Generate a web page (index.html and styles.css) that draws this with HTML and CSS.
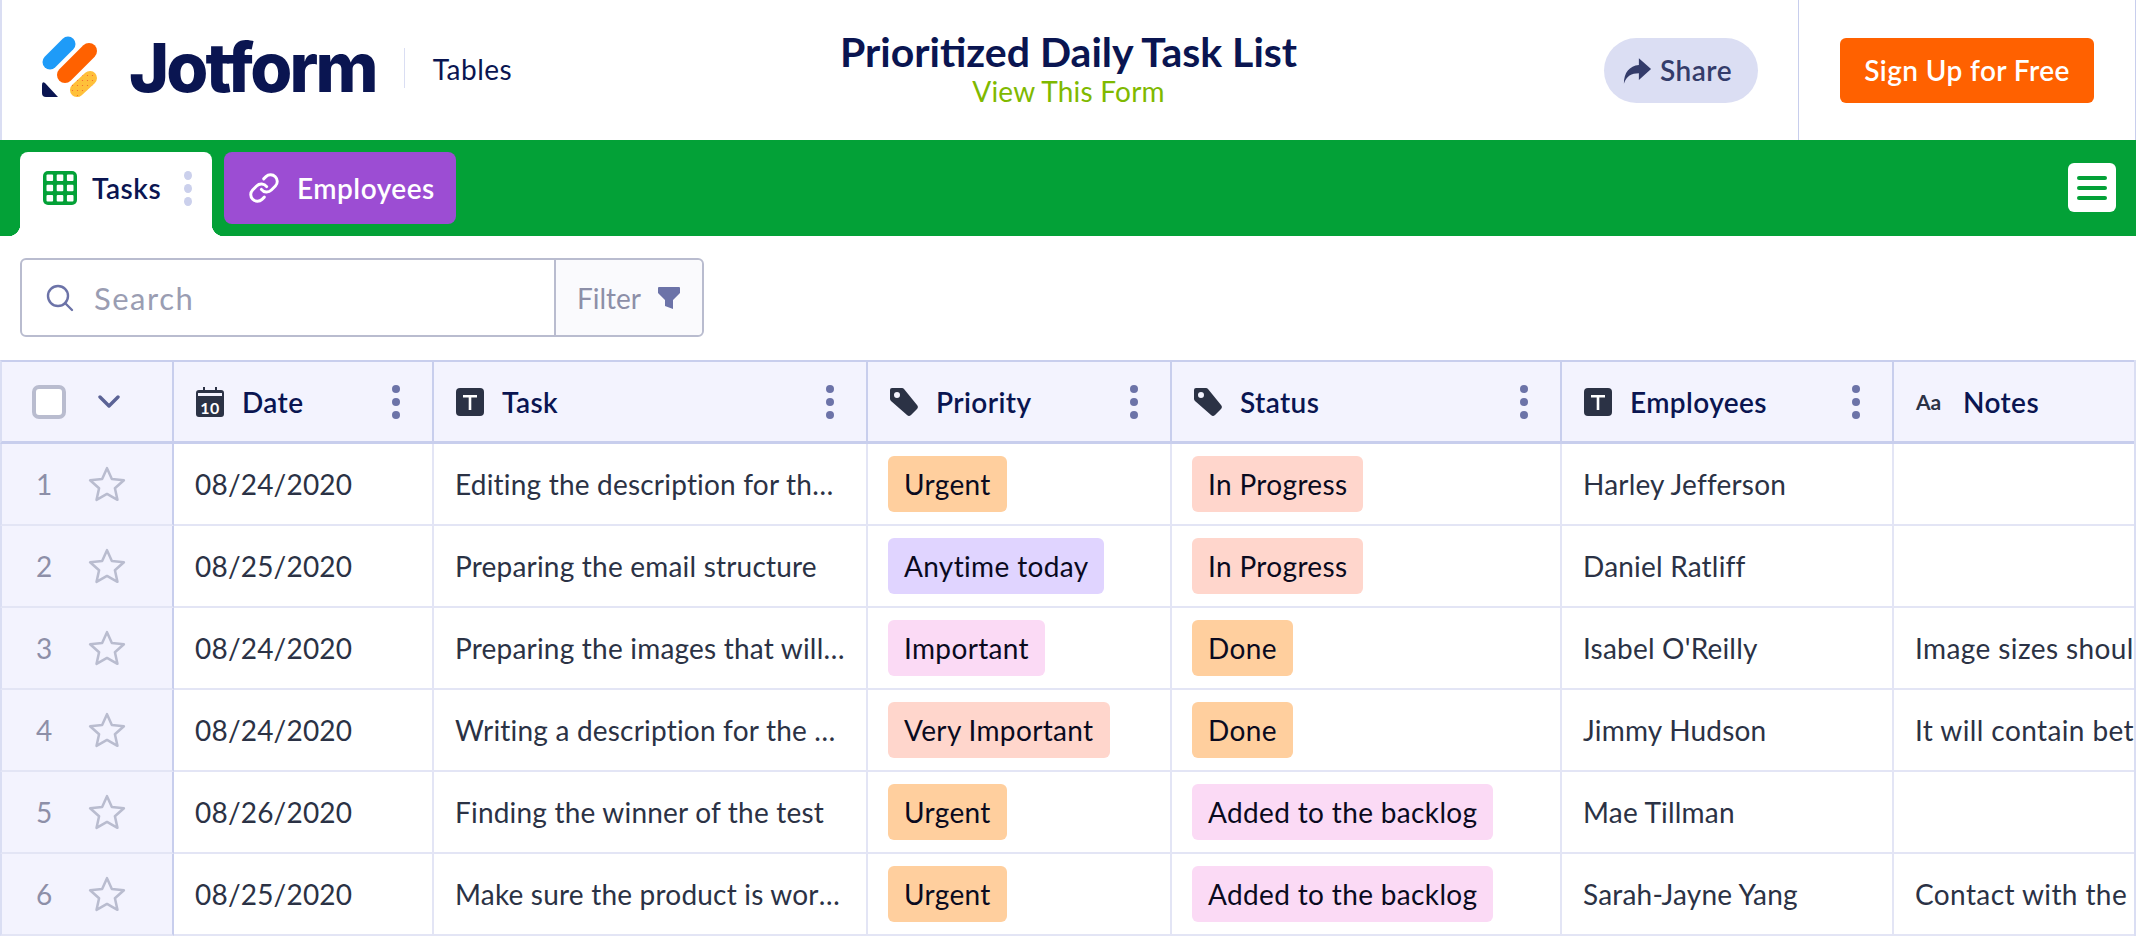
FILE: index.html
```html
<!DOCTYPE html>
<html lang="en">
<head>
  <meta charset="UTF-8">
  <title>Prioritized Daily Task List</title>
  <link rel="stylesheet" href="styles.css">
</head>
<body>
  <header class="top-bar">
    <div class="brand">
      <svg class="logo-mark" viewBox="40 32 60 64" width="60" height="64">
        <defs>
          <pattern id="logo-dots" width="5" height="5" patternUnits="userSpaceOnUse">
            <rect width="5" height="5" fill="#FFC03A"/>
            <circle cx="2.500" cy="2.500" r="0.600" fill="#F0602A"/>
          </pattern>
        </defs>
        <line x1="50" y1="59" x2="68" y2="41" stroke="#1E9BF8" stroke-width="15" stroke-linecap="round"/>
        <line x1="65" y1="72" x2="89" y2="48" stroke="#FF6100" stroke-width="16" stroke-linecap="round"/>
        <line x1="77" y1="87" x2="90" y2="75" stroke="url(#logo-dots)" stroke-width="14" stroke-linecap="round"/>
        <path d="M42 82Q42 78 45 80L58 94H46Q42 94 42 90Z" fill="#0A1551"/>
      </svg>
      <span class="logo-word">Jotform</span>
      <span class="brand-sep"></span>
      <span class="brand-sub">Tables</span>
    </div>
    <div class="title-block">
      <h1>Prioritized Daily Task List</h1>
      <a class="view-form">View This Form</a>
    </div>
    <div class="actions">
      <button class="share-btn">
        <svg viewBox="0 0 32 28" width="30" height="27"><path d="M18 1l13 11.500L18 24v-7C10 17 5 20 2 28 2 16 8 9 18 8z" fill="#343C6A"/></svg>
        <span>Share</span>
      </button>
      <div class="signup-wrap"><button class="signup-btn"><span>Sign Up for Free</span></button></div>
    </div>
  </header>

  <nav class="tab-bar">
    <div class="tab tab-active">
      <svg viewBox="0 0 34 34" width="34" height="34">
        <rect width="34" height="34" rx="5" fill="#03A137"/>
        <g fill="#fff">
          <rect x="3.500" y="3.500" width="6.600" height="6.600" rx="1"/><rect x="13.700" y="3.500" width="6.600" height="6.600" rx="1"/><rect x="23.900" y="3.500" width="6.600" height="6.600" rx="1"/>
          <rect x="3.500" y="13.700" width="6.600" height="6.600" rx="1"/><rect x="13.700" y="13.700" width="6.600" height="6.600" rx="1"/><rect x="23.900" y="13.700" width="6.600" height="6.600" rx="1"/>
          <rect x="3.500" y="23.900" width="6.600" height="6.600" rx="1"/><rect x="13.700" y="23.900" width="6.600" height="6.600" rx="1"/><rect x="23.900" y="23.900" width="6.600" height="6.600" rx="1"/>
        </g>
      </svg>
      <span>Tasks</span>
      <span class="tab-dots"><i></i><i></i><i></i></span>
    </div>
    <div class="tab tab-link">
      <svg viewBox="0 0 24 24" width="32" height="32" fill="none" stroke="#fff" stroke-width="2.200" stroke-linecap="round" stroke-linejoin="round">
        <path d="M10 13a5 5 0 0 0 7.540.540l3-3a5 5 0 0 0-7.070-7.070l-1.720 1.710"/>
        <path d="M14 11a5 5 0 0 0-7.540-.540l-3 3a5 5 0 0 0 7.070 7.070l1.710-1.710"/>
      </svg>
      <span>Employees</span>
    </div>
    <div class="menu-btn"><i></i><i></i><i></i></div>
  </nav>

  <section class="tools">
    <div class="search-group">
      <div class="search">
        <svg viewBox="0 0 28 28" width="28" height="28" fill="none" stroke="#6C73A8" stroke-width="2.400" stroke-linecap="round"><circle cx="12" cy="12" r="10"/><path d="M19 19l7 7"/></svg>
        <span>Search</span>
      </div>
      <div class="filter">
        <span>Filter</span>
        <svg viewBox="0 0 24 24" width="24" height="24"><path d="M2 1h20a1 1 0 0 1 1 1v5l-7 7v9l-8-3v-6L1 7V2a1 1 0 0 1 1-1z" fill="#6C73A8"/></svg>
      </div>
    </div>
  </section>

  <div class="table-wrap">
    <table class="grid">
      <colgroup>
        <col class="c-idx"><col class="c-date"><col class="c-task"><col class="c-pri"><col class="c-stat"><col class="c-emp"><col class="c-notes">
      </colgroup>
      <thead>
        <tr>
          <th class="idx">
            <div class="idx-head">
              <span class="check"></span>
              <svg viewBox="0 0 22 14" width="22" height="14" fill="none" stroke="#5B6396" stroke-width="3.400" stroke-linecap="round" stroke-linejoin="round"><path d="M2 2l9 9 9-9"/></svg>
            </div>
          </th>
          <th><div class="head">
            <svg viewBox="0 0 28 30" width="28" height="30"><path d="M3 3h4V0h2v3h10V0h2v3h4a3 3 0 0 1 3 3v21a3 3 0 0 1-3 3H3a3 3 0 0 1-3-3V6a3 3 0 0 1 3-3z" fill="#2B3245"/><rect x="2" y="6" width="24" height="3" fill="#F3F3FE"/><text x="14" y="26.500" text-anchor="middle" class="cal-num">10</text></svg>
            <span>Date</span><span class="dots"><i></i><i></i><i></i></span>
          </div></th>
          <th><div class="head">
            <svg viewBox="0 0 28 28" width="28" height="28"><rect width="28" height="28" rx="4" fill="#2B3245"/><path d="M7 7h14v2.600h-5.700V22h-2.600V9.600H7z" fill="#fff"/></svg>
            <span>Task</span><span class="dots"><i></i><i></i><i></i></span>
          </div></th>
          <th><div class="head">
            <svg viewBox="0 0 28 28" width="28" height="28"><path fill-rule="evenodd" d="M2 0h10a3 3 0 0 1 2 1l13 16a3 3 0 0 1 0 4l-6 6a3 3 0 0 1-4 0L1 13a3 3 0 0 1-1-2V2a2 2 0 0 1 2-2zm5 4a3 3 0 1 0 0 6 3 3 0 0 0 0-6z" fill="#2B3245"/></svg>
            <span>Priority</span><span class="dots"><i></i><i></i><i></i></span>
          </div></th>
          <th><div class="head">
            <svg viewBox="0 0 28 28" width="28" height="28"><path fill-rule="evenodd" d="M2 0h10a3 3 0 0 1 2 1l13 16a3 3 0 0 1 0 4l-6 6a3 3 0 0 1-4 0L1 13a3 3 0 0 1-1-2V2a2 2 0 0 1 2-2zm5 4a3 3 0 1 0 0 6 3 3 0 0 0 0-6z" fill="#2B3245"/></svg>
            <span>Status</span><span class="dots"><i></i><i></i><i></i></span>
          </div></th>
          <th><div class="head">
            <svg viewBox="0 0 28 28" width="28" height="28"><rect width="28" height="28" rx="4" fill="#2B3245"/><path d="M7 7h14v2.600h-5.700V22h-2.600V9.600H7z" fill="#fff"/></svg>
            <span>Employees</span><span class="dots"><i></i><i></i><i></i></span>
          </div></th>
          <th><div class="head">
            <span class="aa">Aa</span>
            <span>Notes</span>
          </div></th>
        </tr>
      </thead>
      <tbody>
        <tr>
          <td class="idx"><div class="idx-row"><span class="num">1</span><svg class="star" viewBox="0 0 36 36" width="38" height="38"><path d="M18 3l4.600 10.200 11.400 1.300-8.500 7.500 2.400 11L18 27.400 8.100 33l2.400-11L2 14.500l11.400-1.300z"/></svg></div></td>
          <td>08/24/2020</td>
          <td><div class="clip">Editing the description for the landing page</div></td>
          <td><span class="tag orange">Urgent</span></td>
          <td><span class="tag salmon">In Progress</span></td>
          <td>Harley Jefferson</td>
          <td></td>
        </tr>
        <tr>
          <td class="idx"><div class="idx-row"><span class="num">2</span><svg class="star" viewBox="0 0 36 36" width="38" height="38"><path d="M18 3l4.600 10.200 11.400 1.300-8.500 7.500 2.400 11L18 27.400 8.100 33l2.400-11L2 14.500l11.400-1.300z"/></svg></div></td>
          <td>08/25/2020</td>
          <td><div class="clip">Preparing the email structure</div></td>
          <td><span class="tag violet">Anytime today</span></td>
          <td><span class="tag salmon">In Progress</span></td>
          <td>Daniel Ratliff</td>
          <td></td>
        </tr>
        <tr>
          <td class="idx"><div class="idx-row"><span class="num">3</span><svg class="star" viewBox="0 0 36 36" width="38" height="38"><path d="M18 3l4.600 10.200 11.400 1.300-8.500 7.500 2.400 11L18 27.400 8.100 33l2.400-11L2 14.500l11.400-1.300z"/></svg></div></td>
          <td>08/24/2020</td>
          <td><div class="clip">Preparing the images that will be used</div></td>
          <td><span class="tag pink">Important</span></td>
          <td><span class="tag orange">Done</span></td>
          <td>Isabel O'Reilly</td>
          <td class="note">Image sizes should</td>
        </tr>
        <tr>
          <td class="idx"><div class="idx-row"><span class="num">4</span><svg class="star" viewBox="0 0 36 36" width="38" height="38"><path d="M18 3l4.600 10.200 11.400 1.300-8.500 7.500 2.400 11L18 27.400 8.100 33l2.400-11L2 14.500l11.400-1.300z"/></svg></div></td>
          <td>08/24/2020</td>
          <td><div class="clip">Writing a description for the product page</div></td>
          <td><span class="tag salmon">Very Important</span></td>
          <td><span class="tag orange">Done</span></td>
          <td>Jimmy Hudson</td>
          <td class="note">It will contain between</td>
        </tr>
        <tr>
          <td class="idx"><div class="idx-row"><span class="num">5</span><svg class="star" viewBox="0 0 36 36" width="38" height="38"><path d="M18 3l4.600 10.200 11.400 1.300-8.500 7.500 2.400 11L18 27.400 8.100 33l2.400-11L2 14.500l11.400-1.300z"/></svg></div></td>
          <td>08/26/2020</td>
          <td><div class="clip">Finding the winner of the test</div></td>
          <td><span class="tag orange">Urgent</span></td>
          <td><span class="tag pink">Added to the backlog</span></td>
          <td>Mae Tillman</td>
          <td></td>
        </tr>
        <tr>
          <td class="idx"><div class="idx-row"><span class="num">6</span><svg class="star" viewBox="0 0 36 36" width="38" height="38"><path d="M18 3l4.600 10.200 11.400 1.300-8.500 7.500 2.400 11L18 27.400 8.100 33l2.400-11L2 14.500l11.400-1.300z"/></svg></div></td>
          <td>08/25/2020</td>
          <td><div class="clip">Make sure the product is working well</div></td>
          <td><span class="tag orange">Urgent</span></td>
          <td><span class="tag pink">Added to the backlog</span></td>
          <td>Sarah-Jayne Yang</td>
          <td class="note">Contact with the</td>
        </tr>
      </tbody>
    </table>
  </div>
</body>
</html>
```

FILE: styles.css
```css
* {
  box-sizing: border-box;
}
html, body {
  margin: 0;
  height: 936px;
  overflow: hidden;
}
body {
  font-family: "Lato", "Liberation Sans", sans-serif;
  color: #2B3245;
  background: #fff;
}

/* top bar */
.top-bar {
  height: 140px;
  display: grid;
  grid-template-columns: 1fr auto 1fr;
  align-items: center;
  border-left: 2px solid #DADEF3;
  border-right: 1px solid #C8CEED;
}
.brand {
  display: flex;
  align-items: center;
  padding-left: 38px;
}
.logo-mark {
  display: block;
  margin-top: -6px;
}
.logo-word {
  font-family: "Inter", sans-serif;
  font-size: 68px;
  font-weight: 800;
  letter-spacing: -2.800px;
  color: #0A1551;
  margin-left: 29px;
  line-height: 1;
  margin-top: -6px;
}
.brand-sep {
  width: 1px;
  height: 40px;
  background: #DADEF3;
  margin: -4px 28px 0 28px;
}
.brand-sub {
  font-size: 28px;
  letter-spacing: 0.500px;
  color: #0A1551;
  margin-top: -2px;
}
.title-block {
  text-align: center;
  margin-top: -4px;
}
.title-block h1 {
  margin: 0;
  font-size: 41px;
  font-weight: 700;
  line-height: 46px;
  color: #0A1551;
}
.view-form {
  display: block;
  font-size: 28px;
  letter-spacing: 0.200px;
  line-height: 32px;
  color: #7FB900;
}
.actions {
  display: flex;
  justify-content: flex-end;
  align-items: stretch;
  height: 100%;
}
.share-btn {
  align-self: center;
  width: 154px;
  height: 65px;
  border: 0;
  border-radius: 33px;
  background: #DBDEF3;
  color: #343C6A;
  font: 600 28px "Lato", sans-serif;
  letter-spacing: 0.500px;
  display: flex;
  align-items: center;
  padding-left: 18px;
  gap: 8px;
  margin-top: 1px;
}
.share-btn span,
.signup-btn span {
  display: block;
  margin-top: -2px;
}
.signup-wrap {
  margin-left: 40px;
  border-left: 1px solid #C8CEED;
  padding: 0 41px;
  display: flex;
  align-items: center;
}
.signup-btn {
  width: 254px;
  height: 65px;
  border: 0;
  border-radius: 6px;
  background: #FF6100;
  color: #fff;
  font: 600 28px "Lato", sans-serif;
  letter-spacing: 0.400px;
  margin-top: 1px;
}

/* tabs */
.tab-bar {
  height: 96px;
  background: #03A137;
  display: flex;
  align-items: flex-start;
  padding: 12px 20px 0 20px;
  gap: 12px;
}
.tab {
  display: flex;
  align-items: center;
  height: 72px;
  border-radius: 8px;
  font-size: 28px;
  font-weight: 600;
  letter-spacing: 0.500px;
}
.tab-active {
  position: relative;
  width: 192px;
  height: 84px;
  padding: 0 20px 12px 23px;
  background: #fff;
  color: #0A1551;
  gap: 15px;
  border-radius: 8px 8px 0 0;
}
.tab-active::before,
.tab-active::after {
  content: "";
  position: absolute;
  bottom: 0;
  width: 12px;
  height: 12px;
}
.tab-active::before {
  left: -12px;
  background: radial-gradient(circle at 0 0, #03A137 12px, #fff 12.500px);
}
.tab-active::after {
  right: -12px;
  background: radial-gradient(circle at 100% 0, #03A137 12px, #fff 12.500px);
}
.tab-dots {
  display: flex;
  flex-direction: column;
  gap: 4px;
  margin-left: auto;
}
.tab-dots i {
  width: 8px;
  height: 9px;
  border-radius: 50%;
  background: #CBD0EC;
}
.tab-link {
  width: 232px;
  background: #9C4DD3;
  color: #fff;
  padding-left: 24px;
  gap: 17px;
}
.menu-btn {
  margin: 11px 0 0 auto;
  width: 48px;
  height: 49px;
  background: #fff;
  border-radius: 6px;
  display: flex;
  flex-direction: column;
  justify-content: center;
  align-items: center;
  gap: 6px;
}
.menu-btn i {
  width: 30px;
  height: 4px;
  border-radius: 2px;
  background: #03A137;
}

/* search row */
.tools {
  height: 124px;
  padding: 22px 0 0 20px;
}
.search-group {
  display: flex;
  width: 684px;
  height: 79px;
  border: 2px solid #B9BCCF;
  border-radius: 6px;
}
.search {
  width: 532px;
  display: flex;
  align-items: center;
  gap: 20px;
  padding-left: 24px;
  color: #9A9DB2;
  font-size: 31px;
  letter-spacing: 1.500px;
}
.filter {
  flex: 1;
  display: flex;
  align-items: center;
  gap: 16px;
  padding-left: 21px;
  background: #FAFAFD;
  border-left: 2px solid #B9BCCF;
  border-radius: 0 6px 6px 0;
  color: #8D8FA8;
  font-size: 28px;
}

/* table */
.table-wrap {
  overflow: hidden;
  width: 2136px;
  border-right: 2px solid #DADEF3;
}
.grid {
  table-layout: fixed;
  border-collapse: separate;
  border-spacing: 0;
  width: 2337px;
  font-size: 28px;
  letter-spacing: 0.200px;
}
.c-idx { width: 174px; }
.c-date { width: 260px; }
.c-task { width: 434px; }
.c-pri { width: 304px; }
.c-stat { width: 390px; }
.c-emp { width: 332px; }
.c-notes { width: 443px; }
.grid th {
  height: 84px;
  padding: 0 0 0 22px;
  background: #F3F3FE;
  border-top: 2px solid #C8CEED;
  border-right: 2px solid #C8CEED;
  border-bottom: 3px solid #C8CEED;
  font-weight: 600;
  letter-spacing: 0.400px;
  text-align: left;
  color: #0A1551;
}
.grid td {
  height: 82px;
  padding: 0 0 0 21px;
  border-right: 2px solid #E3E5F5;
  border-bottom: 2px solid #E3E5F5;
  white-space: nowrap;
  overflow: hidden;
}
.grid .idx {
  padding: 0 0 0 30px;
  background: #F3F3FE;
  border-right: 2px solid #C8CEED;
  border-left: 2px solid #DADEF3;
}
.grid .note {
  letter-spacing: 0.400px;
}
.head {
  display: flex;
  align-items: center;
  gap: 18px;
}
.head svg {
  flex: none;
}
.dots {
  margin-left: auto;
  margin-right: 32px;
  display: flex;
  flex-direction: column;
  gap: 5px;
}
.dots i {
  width: 8px;
  height: 8px;
  border-radius: 50%;
  background: #6C73A8;
}
.aa {
  font-size: 21px;
  font-weight: 700;
  color: #2B3245;
  width: 29px;
  letter-spacing: 0;
}
.cal-num {
  font: 700 16px "Lato", sans-serif;
  fill: #fff;
}
.idx-head {
  display: flex;
  align-items: center;
  gap: 32px;
}
.check {
  width: 34px;
  height: 34px;
  background: #fff;
  border: 4px solid #B9BCCF;
  border-radius: 7px;
}
.idx-row {
  display: flex;
  align-items: center;
  gap: 40px;
  padding-left: 4px;
}
.num {
  width: 12px;
  color: #8D8FA8;
}
.star {
  fill: none;
  stroke: #B9BCCF;
  stroke-width: 2.400;
  stroke-linejoin: round;
}
.clip {
  width: 392px;
  overflow: hidden;
  text-overflow: ellipsis;
}
.tag {
  display: inline-block;
  height: 56px;
  line-height: 56px;
  padding: 0 16px;
  margin-left: -1px;
  border-radius: 6px;
  color: #0A0A1E;
  letter-spacing: 0.350px;
  vertical-align: middle;
}
.orange { background: #FFCF9E; }
.salmon { background: #FFD6CC; }
.violet { background: #E0D4FF; }
.pink { background: #FBDAF5; }
```
